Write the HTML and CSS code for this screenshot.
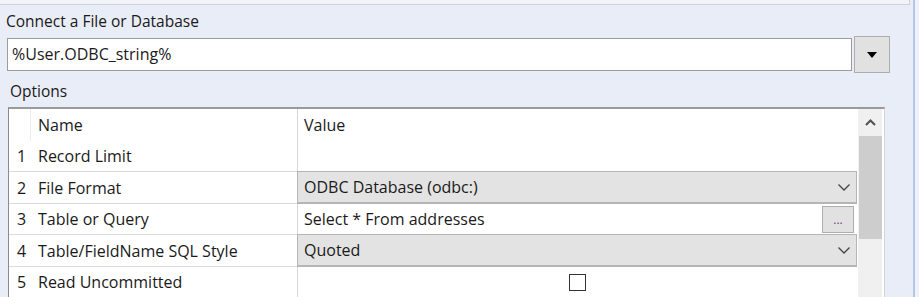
FILE: index.html
```html
<!DOCTYPE html>
<html>
<head>
<meta charset="utf-8">
<link rel="stylesheet" href="styles.css">
</head>
<body>
<div class="page">
  <div class="main">
    <div class="topstrip"></div>
    <div class="label label-connect">Connect a File or Database</div>
    <div class="connect-row">
      <div class="textbox">%User.ODBC_string%</div>
      <div class="dropbtn">
        <svg width="10" height="6" viewBox="0 0 10 6"><path d="M0 0H10L5 6Z" fill="#000"/></svg>
      </div>
    </div>
    <div class="label label-options">Options</div>
    <div class="gridbox">
      <div class="grid">
        <div class="row header">
          <div class="c-num"></div>
          <div class="c-name">Name</div>
          <div class="c-val">Value</div>
        </div>
        <div class="row r-odd">
          <div class="c-num">1</div>
          <div class="c-name">Record Limit</div>
          <div class="c-val"></div>
        </div>
        <div class="row r-even">
          <div class="c-num">2</div>
          <div class="c-name">File Format</div>
          <div class="c-val combo">
            <span>ODBC Database (odbc:)</span>
            <svg class="chev" width="12" height="7" viewBox="0 0 12 7"><path d="M0.5 0.5L6 6L11.5 0.5" fill="none" stroke="#444" stroke-width="1.3"/></svg>
          </div>
        </div>
        <div class="row r-odd">
          <div class="c-num">3</div>
          <div class="c-name">Table or Query</div>
          <div class="c-val text-val">
            <span>Select * From addresses</span>
            <div class="ellipsis">...</div>
          </div>
        </div>
        <div class="row r-even">
          <div class="c-num">4</div>
          <div class="c-name">Table/FieldName SQL Style</div>
          <div class="c-val combo">
            <span>Quoted</span>
            <svg class="chev" width="12" height="7" viewBox="0 0 12 7"><path d="M0.5 0.5L6 6L11.5 0.5" fill="none" stroke="#444" stroke-width="1.3"/></svg>
          </div>
        </div>
        <div class="row r-odd">
          <div class="c-num">5</div>
          <div class="c-name">Read Uncommitted</div>
          <div class="c-val check-val"><div class="checkbox"></div></div>
        </div>
      </div>
      <div class="scrollbar">
        <div class="sb-up">
          <svg width="11" height="7" viewBox="0 0 11 7"><path d="M1 6L5.5 1.5L10 6" fill="none" stroke="#505050" stroke-width="2"/></svg>
        </div>
        <div class="sb-thumb"></div>
      </div>
    </div>
  </div>
  <div class="edge"></div>
  <div class="edge2"></div>
</div>
</body>
</html>
```

FILE: styles.css
```css
html, body {
  margin: 0;
  padding: 0;
}
body {
  background: #e9edf7;
  font-family: "Open Sans", "Liberation Sans", sans-serif;
  font-size: 16px;
  color: #1a1a1a;
}
.page {
  display: flex;
  width: 919px;
  height: 297px;
  overflow: hidden;
}
.main {
  width: 913px;
  flex: none;
}
.edge {
  width: 2px;
  background: #b4c4e2;
  flex: none;
}
.edge2 {
  flex: 1;
  background: #eef1f9;
}
.topstrip {
  height: 4px;
  margin-right: 3px;
  background: #f2f4f9;
  border-bottom: 1px solid #cdd1da;
  border-right: 1px solid #cdd1da;
}
.label {
  font-size: 15.5px;
  line-height: 20px;
}
.label-connect {
  padding: 6px 0 0 6px;
}
.connect-row {
  display: flex;
  align-items: center;
  margin-top: 5px;
  padding-left: 7px;
}
.textbox {
  height: 31px;
  border: 1px solid #9c9c9c;
  background: #fff;
  line-height: 31px;
  padding-left: 4px;
  width: 839px;
}
.dropbtn {
  margin-left: 2px;
  width: 34px;
  height: 35px;
  background: #e1e1e1;
  border: 1px solid #adadad;
  display: flex;
  align-items: center;
  justify-content: center;
}
.label-options {
  padding: 8px 0 0 10px;
}
.gridbox {
  margin: 6px 0 0 8px;
  width: 875px;
  height: 200px;
  border-top: 2px solid #9a9a9a;
  border-left: 1px solid #8a8a8a;
  border-right: 1px solid #d4d4d4;
  background: #fff;
  display: flex;
}
.grid {
  width: 848px;
  flex: none;
}
.row {
  display: grid;
  grid-template-columns: 22px 267px 1fr;
  border-bottom: 1px solid #dadada;
  box-sizing: border-box;
}
.row > div {
  display: flex;
  align-items: center;
  white-space: nowrap;
}
.header {
  height: 32px;
  border-bottom: none;
}
.header > div {
  align-items: flex-end;
  padding-bottom: 5px;
}
.header .c-num {
  border-right: 1px solid #ececec;
}
.r-odd { height: 31px; }
.r-even { height: 32px; }
.c-num {
  padding-left: 8px;
}
.c-name {
  padding-left: 7px;
  border-right: 1px solid #d6d6d6;
}
.c-val {
  padding-left: 6px;
}
.combo {
  background: #e3e3e3;
  border: 1px solid #b5b5b5;
  border-bottom-width: 2px;
  margin: -1px 0 -1px -1px;
  justify-content: space-between;
  padding-right: 6px;
}
.chev {
  flex: none;
}
.text-val {
  justify-content: space-between;
  padding-right: 3px;
}
.ellipsis {
  width: 30px;
  height: 25px;
  background: #e1e1e1;
  border: 1px solid #adadad;
  color: #7a3d8a;
  font-size: 12px;
  display: flex;
  align-items: center;
  justify-content: center;
}
.check-val {
  justify-content: center;
}
.checkbox {
  width: 15px;
  height: 15px;
  border: 1.5px solid #333;
  background: #fff;
  margin-left: -6px;
}
.scrollbar {
  flex: 1;
  background: #f0f0f0;
  margin: 0 2px 0 1px;
}
.sb-up {
  height: 27px;
  display: flex;
  align-items: center;
  justify-content: center;
}
.sb-thumb {
  height: 103px;
  margin: 0 0 0 1px;
  background: #cdcdcd;
}
```
